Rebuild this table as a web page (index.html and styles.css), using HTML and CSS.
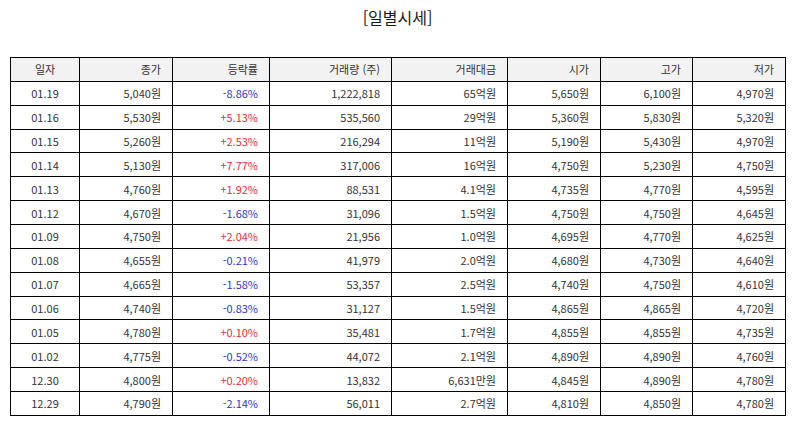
FILE: index.html
```html
<!DOCTYPE html>
<html lang="ko">
<head>
<meta charset="utf-8">
<title>일별시세</title>
<link rel="stylesheet" href="styles.css">
</head>
<body>
<div class="page">
  <h1 class="title">[일별시세]</h1>
  <table class="quotes">
    <colgroup>
      <col class="c1"><col class="c2"><col class="c3"><col class="c4"><col class="c5"><col class="c6"><col class="c7"><col class="c8">
    </colgroup>
    <thead>
      <tr><th class="center">일자</th><th>종가</th><th>등락률</th><th>거래량 (주)</th><th>거래대금</th><th>시가</th><th>고가</th><th>저가</th></tr>
    </thead>
    <tbody>
      <tr><td class="center">01.19</td><td>5,040원</td><td class="down">-8.86%</td><td>1,222,818</td><td>65억원</td><td>5,650원</td><td>6,100원</td><td>4,970원</td></tr>
      <tr><td class="center">01.16</td><td>5,530원</td><td class="up">+5.13%</td><td>535,560</td><td>29억원</td><td>5,360원</td><td>5,830원</td><td>5,320원</td></tr>
      <tr><td class="center">01.15</td><td>5,260원</td><td class="up">+2.53%</td><td>216,294</td><td>11억원</td><td>5,190원</td><td>5,430원</td><td>4,970원</td></tr>
      <tr><td class="center">01.14</td><td>5,130원</td><td class="up">+7.77%</td><td>317,006</td><td>16억원</td><td>4,750원</td><td>5,230원</td><td>4,750원</td></tr>
      <tr><td class="center">01.13</td><td>4,760원</td><td class="up">+1.92%</td><td>88,531</td><td>4.1억원</td><td>4,735원</td><td>4,770원</td><td>4,595원</td></tr>
      <tr><td class="center">01.12</td><td>4,670원</td><td class="down">-1.68%</td><td>31,096</td><td>1.5억원</td><td>4,750원</td><td>4,750원</td><td>4,645원</td></tr>
      <tr><td class="center">01.09</td><td>4,750원</td><td class="up">+2.04%</td><td>21,956</td><td>1.0억원</td><td>4,695원</td><td>4,770원</td><td>4,625원</td></tr>
      <tr><td class="center">01.08</td><td>4,655원</td><td class="down">-0.21%</td><td>41,979</td><td>2.0억원</td><td>4,680원</td><td>4,730원</td><td>4,640원</td></tr>
      <tr><td class="center">01.07</td><td>4,665원</td><td class="down">-1.58%</td><td>53,357</td><td>2.5억원</td><td>4,740원</td><td>4,750원</td><td>4,610원</td></tr>
      <tr><td class="center">01.06</td><td>4,740원</td><td class="down">-0.83%</td><td>31,127</td><td>1.5억원</td><td>4,865원</td><td>4,865원</td><td>4,720원</td></tr>
      <tr><td class="center">01.05</td><td>4,780원</td><td class="up">+0.10%</td><td>35,481</td><td>1.7억원</td><td>4,855원</td><td>4,855원</td><td>4,735원</td></tr>
      <tr><td class="center">01.02</td><td>4,775원</td><td class="down">-0.52%</td><td>44,072</td><td>2.1억원</td><td>4,890원</td><td>4,890원</td><td>4,760원</td></tr>
      <tr><td class="center">12.30</td><td>4,800원</td><td class="up">+0.20%</td><td>13,832</td><td>6,631만원</td><td>4,845원</td><td>4,890원</td><td>4,780원</td></tr>
      <tr><td class="center">12.29</td><td>4,790원</td><td class="down">-2.14%</td><td>56,011</td><td>2.7억원</td><td>4,810원</td><td>4,850원</td><td>4,780원</td></tr>
    </tbody>
  </table>
</div>
</body>
</html>
```
FILE: styles.css
```css
html, body {
  margin: 0;
  padding: 0;
  background: #ffffff;
}
.page {
  width: 794px;
  padding: 0 0 0 10px;
  box-sizing: border-box;
  font-family: "Noto Sans CJK KR", "Noto Sans", sans-serif;
  color: #333333;
}
.title {
  margin: 0;
  padding: 5px 0 0 0;
  height: 57px;
  box-sizing: border-box;
  font-size: 16px;
  font-weight: normal;
  line-height: 24px;
  text-align: center;
  color: #1a1a1a;
  width: 775px;
}
.quotes {
  border-collapse: collapse;
  table-layout: fixed;
  width: 775px;
  font-size: 11px;
}
.c1 { width: 69px; }
.c2 { width: 93px; }
.c3 { width: 97px; }
.c4 { width: 122px; }
.c5 { width: 116px; }
.c6 { width: 93px; }
.c7 { width: 92px; }
.c8 { width: 93px; }
.quotes tr {
  height: 23.87px;
}
.quotes th, .quotes td {
  border: 1px solid #000000;
  padding: 0 11px 0 4px;
  text-align: right;
  font-weight: normal;
  line-height: 14px;
  white-space: nowrap;
}
.quotes th {
  background: #f2f2f2;
}
.quotes .center {
  text-align: center;
  padding: 0 4px;
}
.quotes .up { color: #e0303a; }
.quotes .down { color: #3535c8; }
```
